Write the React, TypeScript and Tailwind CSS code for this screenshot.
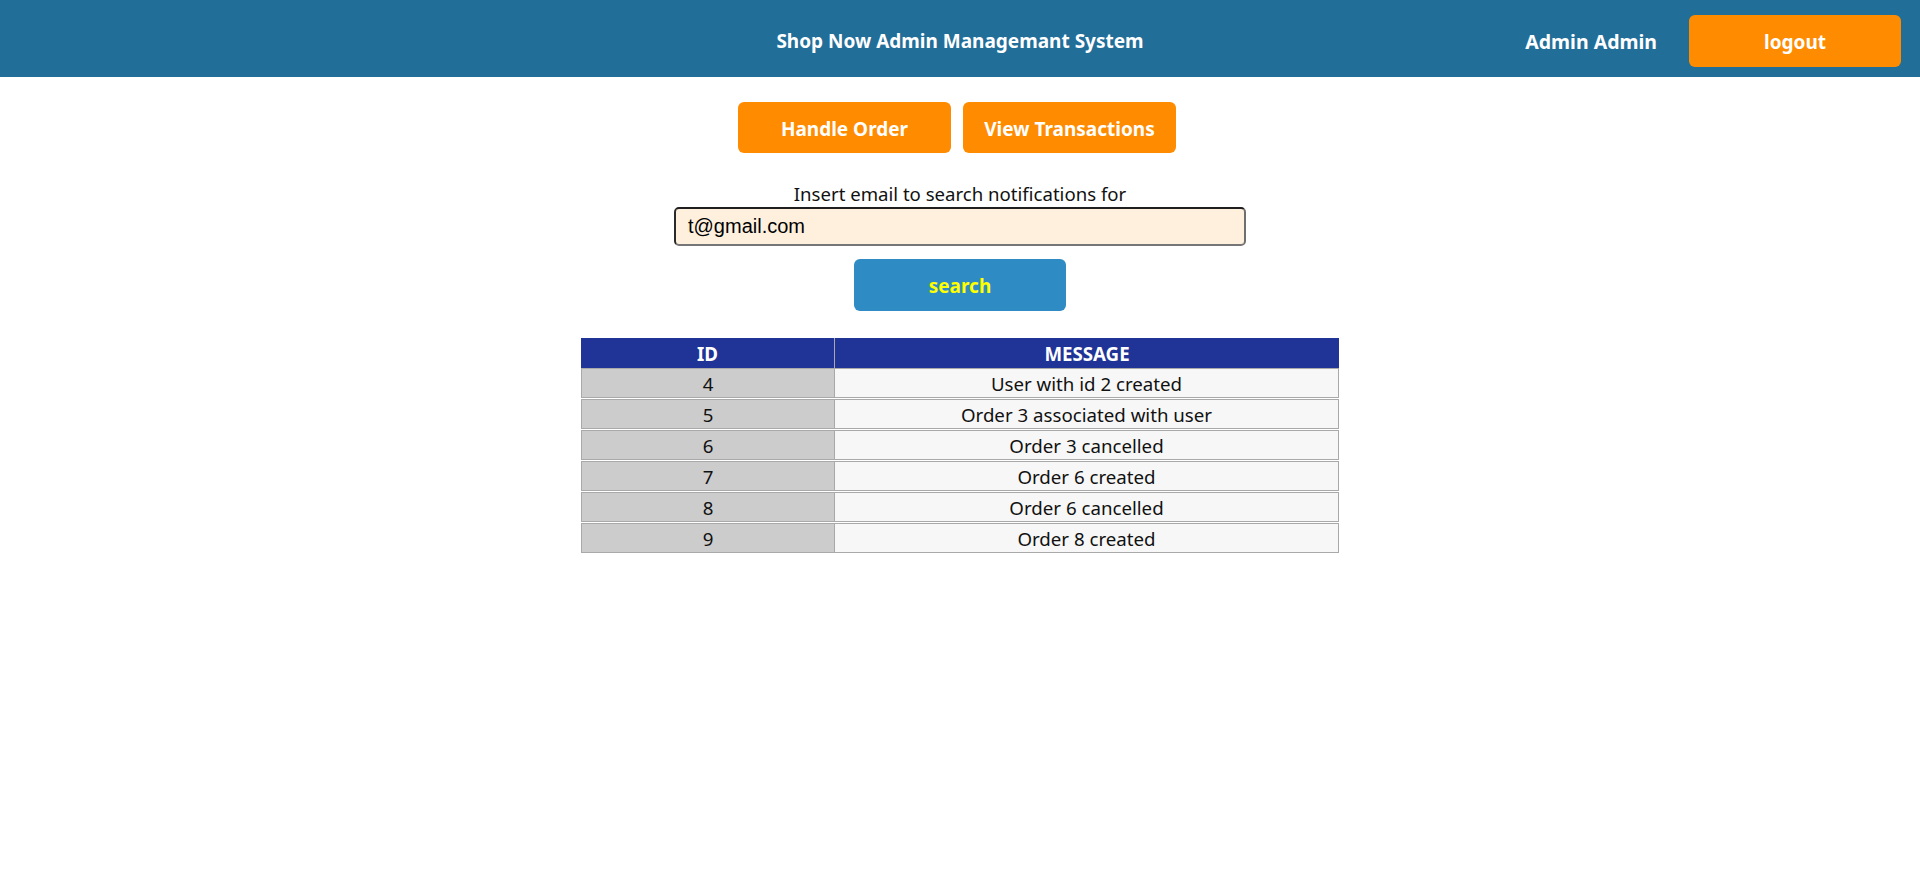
import React from "react";

const rows = [
  { id: 4, msg: "User with id 2 created" },
  { id: 5, msg: "Order 3 associated with user" },
  { id: 6, msg: "Order 3 cancelled" },
  { id: 7, msg: "Order 6 created" },
  { id: 8, msg: "Order 6 cancelled" },
  { id: 9, msg: "Order 8 created" },
];

export default function App() {
  return (
    <div className="min-h-screen bg-white text-[#111] font-['Noto_Sans',sans-serif]">
      <header className="h-[77px] pt-[5px] bg-[#216e99] grid grid-cols-[1fr_auto_1fr] items-center">
        <div />
        <div className="text-white font-bold text-[19px] leading-none">Shop Now Admin Managemant System</div>
        <div className="flex items-center justify-end pr-[19px]">
          <span className="text-white font-bold text-[19.5px] mr-[32px] pt-[2px]">Admin Admin</span>
          <button className="w-[212px] h-[52px] pt-[2px] rounded-[6px] bg-[#ff8c00] text-white font-bold text-[19px]">logout</button>
        </div>
      </header>

      <div className="flex justify-center gap-[12px] mt-[25px] pr-[6px]">
        <button className="w-[213px] h-[51px] pt-[3px] rounded-[6px] bg-[#ff8c00] text-white font-bold text-[19px]">Handle Order</button>
        <button className="w-[213px] h-[51px] pt-[3px] rounded-[6px] bg-[#ff8c00] text-white font-bold text-[19px]">View Transactions</button>
      </div>

      <div className="flex flex-col items-center mt-[29px]">
        <label className="text-[18.6px] leading-[24px] h-[24px]">Insert email to search notifications for</label>
        <input
          defaultValue="t@gmail.com"
          className="w-[572px] h-[39px] mt-[1px] rounded-[5px] border-2 border-t-[#1f1f1f] border-l-[#2a2a2a] border-r-[#6f6f6f] border-b-[#767676] bg-[#fff0de] px-[12px] text-[20px] font-['Liberation_Sans',Arial,sans-serif] text-black outline-none"
        />
        <button className="w-[212px] h-[52px] mt-[13px] pt-[3px] rounded-[6px] bg-[#2e8bc4] text-[#ffff00] font-bold text-[19px]">search</button>
      </div>

      <div className="flex justify-center mt-[27px]">
        <div className="w-[758px] text-[18.7px]">
          <div className="flex h-[30px] bg-[#1f3496] text-white font-bold">
            <div className="w-[254px] pt-[2px] border-r border-[#a9a9a9] flex items-center justify-center">ID</div>
            <div className="flex-1 pt-[2px] flex items-center justify-center">MESSAGE</div>
          </div>
          {rows.map((r, i) => (
            <div key={r.id} className={"flex h-[30px] " + (i < rows.length - 1 ? "mb-px" : "")}>
              <div className="w-[254px] pt-[2px] bg-[#cccccc] border border-[#a9a9a9] flex items-center justify-center">{r.id}</div>
              <div className="flex-1 pt-[2px] bg-[#f7f7f7] border-y border-r border-[#a9a9a9] flex items-center justify-center">{r.msg}</div>
            </div>
          ))}
        </div>
      </div>
    </div>
  );
}
